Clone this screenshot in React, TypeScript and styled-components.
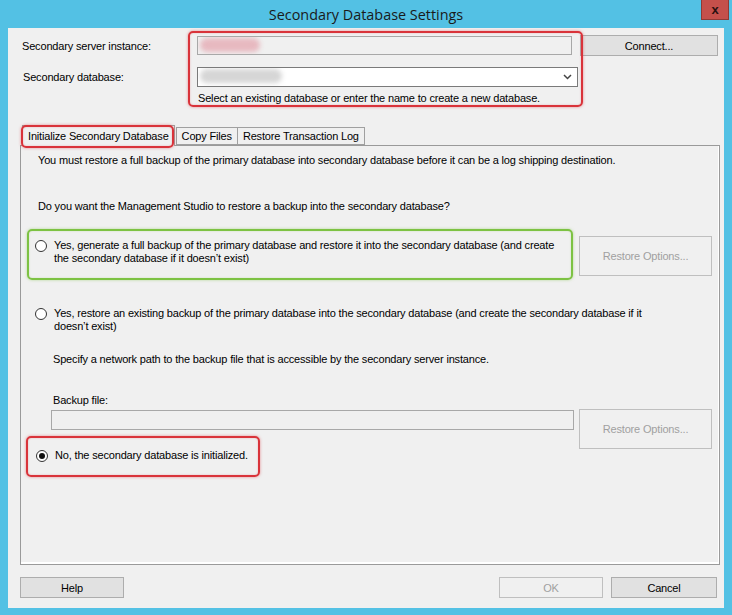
import React from 'react';
import styled, { createGlobalStyle } from 'styled-components';

const GlobalStyle = createGlobalStyle`
  html, body {
    margin: 0;
    padding: 0;
    background: #53c1e4;
  }
  * {
    box-sizing: border-box;
  }
`;

const Window = styled.div`
  width: 732px;
  height: 615px;
  display: flex;
  flex-direction: column;
  background: #53c1e4;
  padding: 0 8px 7px 8px;
  font-family: 'Liberation Sans', Arial, sans-serif;
  font-size: 11px;
  letter-spacing: -0.17px;
  color: #000;
`;

const TitleBar = styled.div`
  position: relative;
  height: 28px;
  display: flex;
  align-items: center;
  justify-content: center;
  font-family: 'Open Sans', 'Noto Sans', sans-serif;
  font-size: 14.4px;
  letter-spacing: 0;
  color: #1a1a1a;
`;

const CloseButton = styled.div`
  position: absolute;
  top: 0;
  right: -5px;
  width: 28px;
  height: 20px;
  background: #c5504b;
  border: 1px solid #8f3a36;
  border-top: none;
  display: flex;
  align-items: center;
  justify-content: center;
  font-family: 'Liberation Sans', Arial, sans-serif;
  font-weight: bold;
  font-size: 13px;
  color: #2a1010;
`;

const Client = styled.div`
  position: relative;
  flex: 1;
  background: #f0f0f0;
  padding: 7px 4px 0 12px;
  display: flex;
  flex-direction: column;
`;

const Row = styled.div<{ $top?: number }>`
  display: flex;
  align-items: center;
  margin-top: ${p => p.$top ?? 0}px;
`;

const Label = styled.div<{ $indent?: number }>`
  width: 177px;
  flex-shrink: 0;
  padding-left: ${p => p.$indent ?? 2}px;
  white-space: nowrap;
`;

const TextBox = styled.div<{ $width: number; $height?: number; $disabled?: boolean }>`
  position: relative;
  width: ${p => p.$width}px;
  height: ${p => p.$height ?? 19}px;
  flex-shrink: 0;
  background: ${p => (p.$disabled ? '#f0f0f0' : '#fff')};
  border: 1px solid ${p => (p.$disabled ? '#a8a8a8' : '#7a7a7a')};
  overflow: hidden;
`;

const ComboBox = styled(TextBox)`
  display: flex;
  align-items: center;
  justify-content: flex-end;
  padding-right: 5px;
`;

const Blur = styled.span<{ $color: string; $width: number }>`
  position: absolute;
  left: 2px;
  top: 1px;
  width: ${p => p.$width}px;
  height: 14px;
  border-radius: 7px;
  background: ${p => p.$color};
  filter: blur(2.5px);
`;

const Button = styled.div<{ $width: number; $height?: number; $disabled?: boolean }>`
  width: ${p => p.$width}px;
  height: ${p => p.$height ?? 21}px;
  display: flex;
  align-items: center;
  justify-content: center;
  background: ${p => (p.$disabled ? '#f0f0f0' : '#e1e1e1')};
  border: 1px solid ${p => (p.$disabled ? '#bfbfbf' : '#adadad')};
  color: ${p => (p.$disabled ? '#a0a0a0' : '#000')};
  flex-shrink: 0;
`;

const Hint = styled.div`
  margin: 4px 0 0 178px;
  line-height: 14px;
  white-space: nowrap;
`;

const Highlight = styled.div<{ $color: string; $x: number; $y: number; $w: number; $h: number }>`
  position: absolute;
  z-index: 2;
  left: ${p => p.$x}px;
  top: ${p => p.$y}px;
  width: ${p => p.$w}px;
  height: ${p => p.$h}px;
  border: 2px solid ${p => p.$color};
  border-radius: 5px;
  box-shadow: 0 0 3px ${p => p.$color}88, inset 0 0 2px ${p => p.$color}55;
  pointer-events: none;
`;

const Tabs = styled.div`
  display: flex;
  align-items: flex-end;
  margin: 20px 0 0 2px;
  height: 20px;
  position: relative;
  z-index: 1;
`;

const Tab = styled.div<{ $active?: boolean }>`
  height: ${p => (p.$active ? 21 : 18)}px;
  padding: 0 5px;
  display: flex;
  align-items: center;
  background: #f0f0f0;
  border: 1px solid #a0a0a0;
  border-bottom: ${p => (p.$active ? 'none' : '1px solid #a0a0a0')};
  margin-right: ${p => (p.$active ? 1 : -1)}px;
  margin-bottom: ${p => (p.$active ? -1 : 0)}px;
  white-space: nowrap;
`;

const Panel = styled.div`
  width: 700px;
  height: 420px;
  border: 1px solid #9a9a9a;
  box-shadow: inset -1px -2px 0 #fff;
  padding: 7px 0 0 17px;
  line-height: 14px;
`;

const Para = styled.div<{ $top?: number; $indent?: number }>`
  margin-top: ${p => p.$top ?? 0}px;
  margin-left: ${p => p.$indent ?? 0}px;
  white-space: nowrap;
`;

const OptionRow = styled.div<{ $top: number }>`
  display: flex;
  align-items: flex-start;
  margin-top: ${p => p.$top}px;
  width: 677px;
  margin-left: -3px;
`;

const Option = styled.div<{ $pad?: number }>`
  flex: 1;
  min-width: 0;
  display: flex;
  align-items: flex-start;
  padding-top: ${p => p.$pad ?? 0}px;
`;

const Radio = styled.span<{ $checked?: boolean }>`
  width: 12px;
  height: 12px;
  margin-top: 1px;
  margin-right: 7px;
  border-radius: 50%;
  border: 1px solid #333;
  background: #fff;
  display: flex;
  align-items: center;
  justify-content: center;
  flex-shrink: 0;

  &::after {
    content: '';
    display: ${p => (p.$checked ? 'block' : 'none')};
    width: 6px;
    height: 6px;
    border-radius: 50%;
    background: #111;
  }
`;

const OptionText = styled.div`
  line-height: 13px;
  white-space: nowrap;
`;

const BackupRow = styled.div`
  display: flex;
  align-items: flex-start;
  justify-content: space-between;
  margin: 2px 0 0 13px;
  width: 661px;
`;

const Footer = styled.div`
  display: flex;
  align-items: center;
  gap: 8px;
  margin-top: 12px;
  width: 697px;
`;

const Spacer = styled.div`
  flex: 1;
`;

function Chevron() {
  return (
    <svg width="9" height="6" viewBox="0 0 9 6">
      <path d="M1 1 L4.5 4.5 L8 1" fill="none" stroke="#444" strokeWidth="1.5" />
    </svg>
  );
}

export default function App() {
  return (
    <>
      <GlobalStyle />
      <Window>
        <TitleBar>
          Secondary Database Settings
          <CloseButton>x</CloseButton>
        </TitleBar>
        <Client>
          <Row>
            <Label>Secondary server instance:</Label>
            <TextBox $width={375} $disabled>
              <Blur $color="#e7b9c0" $width={60} />
            </TextBox>
            <Button $width={138} style={{ marginLeft: 8 }}>
              Connect...
            </Button>
          </Row>
          <Row $top={11}>
            <Label $indent={3}>Secondary database:</Label>
            <ComboBox $width={381} $height={20}>
              <Blur $color="#d6d6d6" $width={82} />
              <Chevron />
            </ComboBox>
          </Row>
          <Hint>Select an existing database or enter the name to create a new database.</Hint>

          <Tabs>
            <Tab $active>Initialize Secondary Database</Tab>
            <Tab>Copy Files</Tab>
            <Tab>Restore Transaction Log</Tab>
          </Tabs>
          <Panel>
            <Para>
              You must restore a full backup of the primary database into secondary database before it can be a log shipping destination.
            </Para>
            <Para $top={32}>Do you want the Management Studio to restore a backup into the secondary database?</Para>

            <OptionRow $top={23}>
              <Option $pad={3}>
                <Radio />
                <OptionText>
                  Yes, generate a full backup of the primary database and restore it into the secondary database (and create
                  <br />
                  the secondary database if it doesn’t exist)
                </OptionText>
              </Option>
              <Button $width={133} $height={40} $disabled>
                Restore Options...
              </Button>
            </OptionRow>

            <OptionRow $top={31}>
              <Option>
                <Radio />
                <OptionText>
                  Yes, restore an existing backup of the primary database into the secondary database (and create the secondary database if it
                  <br />
                  doesn’t exist)
                </OptionText>
              </Option>
            </OptionRow>

            <Para $top={19} $indent={15}>
              Specify a network path to the backup file that is accessible by the secondary server instance.
            </Para>
            <Para $top={27} $indent={15}>
              Backup file:
            </Para>
            <BackupRow>
              <TextBox $width={523} $height={20} $disabled style={{ marginTop: 1 }} />
              <Button $width={133} $height={40} $disabled>
                Restore Options...
              </Button>
            </BackupRow>

            <OptionRow $top={0}>
              <Option>
                <Radio $checked style={{ marginLeft: 1 }} />
                <OptionText>No, the secondary database is initialized.</OptionText>
              </Option>
            </OptionRow>
          </Panel>

          <Footer>
            <Button $width={104}>Help</Button>
            <Spacer />
            <Button $width={104} $disabled>
              OK
            </Button>
            <Button $width={106}>Cancel</Button>
          </Footer>

          <Highlight $color="#d9333a" $x={180} $y={3} $w={395} $h={76} />
          <Highlight $color="#d9333a" $x={13} $y={97} $w={153} $h={23} />
          <Highlight $color="#7dc243" $x={19} $y={201} $w={546} $h={51} />
          <Highlight $color="#d9333a" $x={18} $y={408} $w={234} $h={41} />
        </Client>
      </Window>
    </>
  );
}
